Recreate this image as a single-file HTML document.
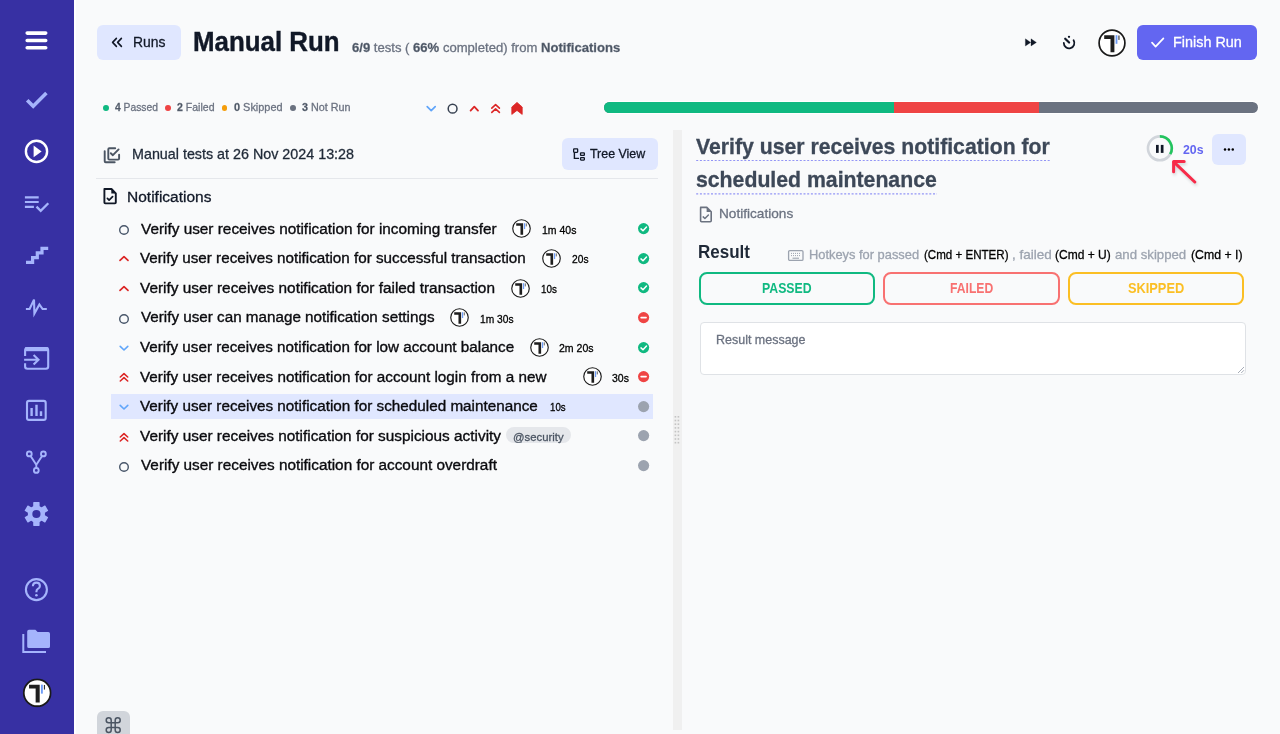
<!DOCTYPE html>
<html><head><meta charset="utf-8">
<style>
*{box-sizing:border-box;margin:0;padding:0}
html,body{width:1280px;height:734px;overflow:hidden;background:#f9fafb;font-family:"Liberation Sans",sans-serif;color:#111827;position:relative}
.a{position:absolute}
svg{display:block;overflow:visible}
.t{white-space:nowrap;position:absolute;line-height:1}
b{font-weight:700}
</style></head><body>
<svg width="0" height="0" style="position:absolute">
<defs>
<symbol id="tav" viewBox="0 0 28 28">
<circle cx="14" cy="14" r="12.9" fill="#fff" stroke="#1a1a1a" stroke-width="1.7"/>
<path d="M6.2 6.2H16.4V23.2H12.5V9.9H6.2Z" fill="#1f1f1f"/>
<rect x="17.6" y="6.2" width="1.8" height="8.6" fill="#6d9cf7"/>
<rect x="20.4" y="6.5" width="1.1" height="4.4" fill="#333"/>
</symbol>
</defs>
</svg>
<div class="a" style="left:0;top:0;width:74px;height:734px;background:#3730a3"></div>
<div class="a" style="left:74.3px;top:0;width:1.4px;height:734px;background:#fff"></div>
<svg class="a" style="left:0;top:0" width="74" height="734" viewBox="0 0 74 734">
<g stroke="#fff" stroke-width="3.6" stroke-linecap="round" fill="none">
<path d="M27.2 33.1H45.7M27.2 40.5H45.7M27.2 47.8H45.7"/>
</g>
<path d="M27.2 100.2L33.2 106.2L46.4 93" stroke="#a5b4fc" stroke-width="3.6" fill="none"/>
<circle cx="36.5" cy="151.4" r="10.6" stroke="#fff" stroke-width="2.4" fill="none"/>
<path d="M33.6 145.6L41.6 151.4L33.6 157.2Z" fill="#fff"/>
<g stroke="#a5b4fc" fill="none">
<path d="M24.9 197.4H38.7M24.9 202H38.7M24.9 206.9H33.9" stroke-width="2.2"/>
<path d="M36.5 206.6L40.7 210.8L48.3 203.2" stroke-width="2.3"/>
<path d="M26 262.4H32.6V257.7H37.3V252.9H42V248.4H48.2" stroke-width="3.2"/>
<path d="M25.9 309H29.6L34 299.6L34.4 313.6L39.4 304.5L42.6 309H46.8" stroke-width="2.1" stroke-linejoin="miter"/>
<path d="M25.1 356V350.4Q25.1 348.1 27.4 348.1H46Q48.2 348.1 48.2 350.4V366.6Q48.2 368.8 46 368.8H27.4Q25.1 368.8 25.1 366.6V363.2" stroke-width="2.1"/>
<path d="M25.1 349.2H48.2" stroke-width="4"/>
<path d="M24.1 359.7H38.5M33.6 355L38.5 359.7L33.6 364.6" stroke-width="2.1"/>
<rect x="27" y="400.9" width="18.7" height="19" rx="2" stroke-width="2.1"/>
<path d="M31.6 408V416M36.5 404.8V416M41 411.3V416" stroke-width="2.4"/>
<circle cx="29.3" cy="453.9" r="2.4" stroke-width="1.9"/>
<circle cx="43.4" cy="453.9" r="2.4" stroke-width="1.9"/>
<circle cx="36.3" cy="470.4" r="2.4" stroke-width="1.9"/>
<path d="M30.6 456L36.3 464.8L42.1 456M36.3 464.8V468" stroke-width="1.9"/>
<circle cx="36.4" cy="589.6" r="10.5" stroke-width="2.1"/>
<path d="M32.9 586.3Q32.9 582.6 36.4 582.6Q39.9 582.6 39.9 585.9Q39.9 587.8 37.8 588.9Q36.4 589.7 36.4 591.8V592.3" stroke-width="2.1"/>
<path d="M23.3 634V652H46" stroke-width="2"/>
</g>
<circle cx="36.4" cy="595.2" r="1.3" fill="#a5b4fc"/>
<path d="M27.2 631.5Q27.2 629.8 28.9 629.8H35.4L37.6 632H48.3Q50 632 50 633.7V646.4Q50 648.1 48.3 648.1H28.9Q27.2 648.1 27.2 646.4Z" fill="#a5b4fc"/>
<g transform="translate(36.4 514)" fill="#a5b4fc">
<circle r="8.6"/>
<g id="teeth"><rect x="-3.2" y="-11.9" width="6.4" height="5" rx="0.6"/></g>
<use href="#teeth" transform="rotate(60)"/><use href="#teeth" transform="rotate(120)"/><use href="#teeth" transform="rotate(180)"/><use href="#teeth" transform="rotate(240)"/><use href="#teeth" transform="rotate(300)"/>
<circle r="4.1" fill="#3730a3"/>
</g>
<use href="#tav" x="22.6" y="678.2" width="29.2" height="29.2"/>
</svg>
<div class="a" style="left:97px;top:25px;width:84px;height:35px;background:#e0e7ff;border-radius:6px"></div>
<svg class="a" style="left:108px;top:34px" width="18" height="16" viewBox="0 0 18 16"><path d="M8.4 4.4L4.6 8.4L8.4 12.4M13.4 4.4L9.6 8.4L13.4 12.4" stroke="#111827" stroke-width="1.6" fill="none" stroke-linecap="round" stroke-linejoin="round"/></svg>
<div class="t" style="left:133.00px;top:34.48px;font-size:15.5px;font-weight:400;color:#111827;-webkit-text-stroke:0.3px #111827;transform:scaleX(0.8981);transform-origin:0 0;">Runs</div>
<div class="t" style="left:193.00px;top:29.34px;font-size:27px;font-weight:700;color:#111827;-webkit-text-stroke:0.4px #111827;transform:scaleX(0.9582);transform-origin:0 0;">Manual Run</div>
<div class="t" style="left:351.80px;top:41.00px;font-size:13px;font-weight:400;color:#6b7280;-webkit-text-stroke:0.3px #6b7280;transform:scaleX(1.0059);transform-origin:0 0;"><b style="color:#4b5563">6/9</b> tests ( <b style="color:#4b5563">66%</b> completed) from <b style="color:#4b5563">Notifications</b></div>
<svg class="a" style="left:1018px;top:30px" width="64" height="26" viewBox="0 0 64 26"><path d="M7.4 8.8L12.7 12.4L7.4 16ZM13 8.8L18.4 12.4L13 16Z" fill="#111827" stroke="#111827" stroke-width="0.3" stroke-linejoin="round"/><path d="M45.8 13A5.3 5.3 0 1 0 55.6 10.2" stroke="#111827" stroke-width="1.8" fill="none" stroke-linecap="round"/><path d="M47.2 8.7L51.1 12.5" stroke="#111827" stroke-width="2.2" stroke-linecap="round"/><circle cx="51" cy="6.8" r="1.15" fill="#111827"/></svg>
<svg class="a" style="left:1097.5px;top:28.8px" width="28" height="28"><use href="#tav"/></svg>
<div class="a" style="left:1136.8px;top:25px;width:120.4px;height:35px;background:#6366f1;border-radius:6px"></div>
<svg class="a" style="left:1148px;top:34px" width="20" height="16" viewBox="0 0 20 16"><path d="M4 8.7L7.6 12.6L15.4 4.3" stroke="#fff" stroke-width="1.7" fill="none" stroke-linecap="round" stroke-linejoin="round"/></svg>
<div class="t" style="left:1172.50px;top:34.38px;font-size:15.5px;font-weight:400;color:#ffffff;-webkit-text-stroke:0.3px #ffffff;transform:scaleX(0.9286);transform-origin:0 0;">Finish Run</div>
<div class="a" style="left:103.0px;top:105.1px;width:5.8px;height:5.8px;border-radius:50%;background:#10b981"></div>
<div class="a" style="left:164.9px;top:105.1px;width:5.8px;height:5.8px;border-radius:50%;background:#ef4444"></div>
<div class="a" style="left:221.6px;top:105.1px;width:5.8px;height:5.8px;border-radius:50%;background:#f59e0b"></div>
<div class="a" style="left:290.4px;top:105.1px;width:5.8px;height:5.8px;border-radius:50%;background:#6b7280"></div>
<div class="t" style="left:115.00px;top:101.77px;font-size:11.5px;font-weight:400;color:#6b7280;-webkit-text-stroke:0.3px #6b7280;transform:scaleX(0.8943);transform-origin:0 0;"><b style="color:#4b5563">4</b> Passed</div>
<div class="t" style="left:177.30px;top:101.77px;font-size:11.5px;font-weight:400;color:#6b7280;-webkit-text-stroke:0.3px #6b7280;transform:scaleX(0.9160);transform-origin:0 0;"><b style="color:#4b5563">2</b> Failed</div>
<div class="t" style="left:234.20px;top:101.77px;font-size:11.5px;font-weight:400;color:#6b7280;-webkit-text-stroke:0.3px #6b7280;transform:scaleX(0.9497);transform-origin:0 0;"><b style="color:#4b5563">0</b> Skipped</div>
<div class="t" style="left:302.40px;top:101.77px;font-size:11.5px;font-weight:400;color:#6b7280;-webkit-text-stroke:0.3px #6b7280;transform:scaleX(0.9363);transform-origin:0 0;"><b style="color:#4b5563">3</b> Not Run</div>
<svg class="a" style="left:418px;top:96px" width="110" height="24" viewBox="0 0 110 24"><path d="M9.2 10.6L13.2 14.6L17.2 10.6" stroke="#60a5fa" stroke-width="1.7" fill="none" stroke-linecap="round" stroke-linejoin="round"/><circle cx="34.6" cy="12.7" r="4.4" stroke="#374151" stroke-width="1.5" fill="none"/><path d="M52.6 14.6L56.3 10.6L60 14.6" stroke="#dc2626" stroke-width="1.8" fill="none" stroke-linecap="round" stroke-linejoin="round"/><path d="M73.8 12.2L77.6 8.6L81.4 12.2M73.8 16.4L77.6 12.8L81.4 16.4" stroke="#dc2626" stroke-width="1.6" fill="none" stroke-linecap="round" stroke-linejoin="round"/><path d="M93.8 11L99 6.4L104.2 11V18.4L99 14.4L93.8 18.4Z" fill="#dc2626" stroke="#dc2626" stroke-width="0.8" stroke-linejoin="round"/></svg>
<div class="a" style="left:603.6px;top:102px;width:654px;height:11px;border-radius:5.5px;overflow:hidden;box-shadow:0 0 0 1px #fff;background:#6b7280"><div class="a" style="left:0;top:0;width:290.6px;height:11px;background:#10b981"></div><div class="a" style="left:290.6px;top:0;width:145.2px;height:11px;background:#ef4444"></div></div>
<svg class="a" style="left:100px;top:144px" width="24" height="22" viewBox="0 0 24 22"><path d="M4.7 7.1V17.2Q4.7 18.2 5.7 18.2H14.7" stroke="#4b5563" stroke-width="1.9" fill="none" stroke-linecap="round"/><path d="M15.2 4.2H9.3Q8.3 4.2 8.3 5.2V14.6Q8.3 15.6 9.3 15.6H18.1Q19.1 15.6 19.1 14.6V10.8" stroke="#4b5563" stroke-width="1.9" fill="none" stroke-linecap="round"/><path d="M10.8 9.2L12.9 11.2L18.6 5.4" stroke="#4b5563" stroke-width="1.9" fill="none" stroke-linecap="round" stroke-linejoin="round"/></svg>
<div class="t" style="left:131.80px;top:146.10px;font-size:15px;font-weight:400;color:#1f2937;-webkit-text-stroke:0.3px #1f2937;transform:scaleX(0.9542);transform-origin:0 0;">Manual tests at 26 Nov 2024 13:28</div>
<div class="a" style="left:561.6px;top:138.2px;width:96px;height:31.6px;background:#e0e7ff;border-radius:6px"></div>
<svg class="a" style="left:570px;top:145px" width="18" height="18" viewBox="0 0 18 18"><rect x="3.65" y="3.95" width="4" height="3.4" rx="0.5" stroke="#111827" stroke-width="1.3" fill="none"/><path d="M4.4 7.6V13.4H9" stroke="#111827" stroke-width="1.4" fill="none"/><rect x="10.55" y="7.85" width="3.8" height="2.6" rx="0.5" stroke="#111827" stroke-width="1.3" fill="none"/><rect x="10.55" y="12.65" width="3.8" height="2.4" rx="0.5" stroke="#111827" stroke-width="1.3" fill="none"/></svg>
<div class="t" style="left:590.20px;top:146.73px;font-size:13.2px;font-weight:400;color:#111827;-webkit-text-stroke:0.3px #111827;transform:scaleX(0.9413);transform-origin:0 0;">Tree View</div>
<div class="a" style="left:96px;top:178px;width:561.5px;height:1px;background:#e5e7eb;"></div>
<svg class="a" style="left:100px;top:185px" width="20" height="22" viewBox="0 0 20 22"><path d="M4.4 4H11.5L15.8 8.3V17.6Q15.8 18.4 15 18.4H5.2Q4.4 18.4 4.4 17.6V4.8Q4.4 4 5.2 4Z" stroke="#111827" stroke-width="1.9" fill="none" stroke-linejoin="round"/><path d="M11.3 4V8.5H15.8Z" fill="#111827"/><path d="M7.4 13.4L9.1 15.1L12.6 11.6" stroke="#111827" stroke-width="1.7" fill="none" stroke-linecap="round" stroke-linejoin="round"/></svg>
<div class="t" style="left:126.80px;top:189.38px;font-size:15.5px;font-weight:400;color:#111827;-webkit-text-stroke:0.3px #111827;transform:scaleX(1.0007);transform-origin:0 0;">Notifications</div>
<div class="a" style="left:111.2px;top:393.6px;width:541.8px;height:25.8px;background:#e0e7ff;"></div>
<svg class="a" style="left:119.3px;top:225.3px" width="10" height="10" viewBox="0 0 10 10"><circle cx="5" cy="5" r="4.3" stroke="#475569" stroke-width="1.4" fill="none"/></svg>
<div class="t" style="left:141.00px;top:220.53px;font-size:15.2px;font-weight:400;color:#0b0b0f;-webkit-text-stroke:0.35px #0b0b0f;transform:scaleX(1.0102);transform-origin:0 0;">Verify user receives notification for incoming transfer</div>
<svg class="a" style="left:512.0px;top:219.30px" width="19" height="19"><use href="#tav"/></svg>
<div class="t" style="left:541.80px;top:224.73px;font-size:11.3px;font-weight:400;color:#000000;-webkit-text-stroke:0.3px #000000;transform:scaleX(0.9286);transform-origin:0 0;">1m 40s</div>
<svg class="a" style="left:637.8px;top:223.1px" width="11.2" height="11.2" viewBox="0 0 11.2 11.2"><circle cx="5.6" cy="5.6" r="5.6" fill="#10b981"/><path d="M3 5.9L5 7.7L8.5 4" stroke="#fff" stroke-width="1.5" fill="none" stroke-linecap="round" stroke-linejoin="round"/></svg>
<svg class="a" style="left:119.3px;top:253.1px" width="10" height="10" viewBox="0 0 10 10"><path d="M1 7.3L5 3.6L9 7.3" stroke="#dc2626" stroke-width="1.7" fill="none" stroke-linecap="round" stroke-linejoin="round"/></svg>
<div class="t" style="left:140.00px;top:250.13px;font-size:15.2px;font-weight:400;color:#0b0b0f;-webkit-text-stroke:0.35px #0b0b0f;transform:scaleX(1.0020);transform-origin:0 0;">Verify user receives notification for successful transaction</div>
<svg class="a" style="left:541.8px;top:248.90px" width="19" height="19"><use href="#tav"/></svg>
<div class="t" style="left:571.50px;top:254.33px;font-size:11.3px;font-weight:400;color:#000000;-webkit-text-stroke:0.3px #000000;transform:scaleX(0.9057);transform-origin:0 0;">20s</div>
<svg class="a" style="left:637.8px;top:252.7px" width="11.2" height="11.2" viewBox="0 0 11.2 11.2"><circle cx="5.6" cy="5.6" r="5.6" fill="#10b981"/><path d="M3 5.9L5 7.7L8.5 4" stroke="#fff" stroke-width="1.5" fill="none" stroke-linecap="round" stroke-linejoin="round"/></svg>
<svg class="a" style="left:119.3px;top:282.7px" width="10" height="10" viewBox="0 0 10 10"><path d="M1 7.3L5 3.6L9 7.3" stroke="#dc2626" stroke-width="1.7" fill="none" stroke-linecap="round" stroke-linejoin="round"/></svg>
<div class="t" style="left:140.00px;top:279.73px;font-size:15.2px;font-weight:400;color:#0b0b0f;-webkit-text-stroke:0.35px #0b0b0f;transform:scaleX(1.0133);transform-origin:0 0;">Verify user receives notification for failed transaction</div>
<svg class="a" style="left:511.3px;top:278.50px" width="19" height="19"><use href="#tav"/></svg>
<div class="t" style="left:540.60px;top:283.93px;font-size:11.3px;font-weight:400;color:#000000;-webkit-text-stroke:0.3px #000000;transform:scaleX(0.8727);transform-origin:0 0;">10s</div>
<svg class="a" style="left:637.8px;top:282.3px" width="11.2" height="11.2" viewBox="0 0 11.2 11.2"><circle cx="5.6" cy="5.6" r="5.6" fill="#10b981"/><path d="M3 5.9L5 7.7L8.5 4" stroke="#fff" stroke-width="1.5" fill="none" stroke-linecap="round" stroke-linejoin="round"/></svg>
<svg class="a" style="left:119.3px;top:314.1px" width="10" height="10" viewBox="0 0 10 10"><circle cx="5" cy="5" r="4.3" stroke="#475569" stroke-width="1.4" fill="none"/></svg>
<div class="t" style="left:141.00px;top:309.33px;font-size:15.2px;font-weight:400;color:#0b0b0f;-webkit-text-stroke:0.35px #0b0b0f;transform:scaleX(1.0019);transform-origin:0 0;">Verify user can manage notification settings</div>
<svg class="a" style="left:449.7px;top:308.10px" width="19" height="19"><use href="#tav"/></svg>
<div class="t" style="left:479.70px;top:313.53px;font-size:11.3px;font-weight:400;color:#000000;-webkit-text-stroke:0.3px #000000;transform:scaleX(0.9043);transform-origin:0 0;">1m 30s</div>
<svg class="a" style="left:637.8px;top:311.9px" width="11.2" height="11.2" viewBox="0 0 11.2 11.2"><circle cx="5.6" cy="5.6" r="5.6" fill="#ef4444"/><path d="M3.2 5.6H8" stroke="#fff" stroke-width="1.8" stroke-linecap="round"/></svg>
<svg class="a" style="left:119.3px;top:342.8px" width="10" height="10" viewBox="0 0 10 10"><path d="M1.2 3.4L5 7L8.8 3.4" stroke="#60a5fa" stroke-width="1.6" fill="none" stroke-linecap="round" stroke-linejoin="round"/></svg>
<div class="t" style="left:140.00px;top:338.93px;font-size:15.2px;font-weight:400;color:#0b0b0f;-webkit-text-stroke:0.35px #0b0b0f;transform:scaleX(1.0028);transform-origin:0 0;">Verify user receives notification for low account balance</div>
<svg class="a" style="left:529.6px;top:337.70px" width="19" height="19"><use href="#tav"/></svg>
<div class="t" style="left:559.40px;top:343.13px;font-size:11.3px;font-weight:400;color:#000000;-webkit-text-stroke:0.3px #000000;transform:scaleX(0.9340);transform-origin:0 0;">2m 20s</div>
<svg class="a" style="left:637.8px;top:341.5px" width="11.2" height="11.2" viewBox="0 0 11.2 11.2"><circle cx="5.6" cy="5.6" r="5.6" fill="#10b981"/><path d="M3 5.9L5 7.7L8.5 4" stroke="#fff" stroke-width="1.5" fill="none" stroke-linecap="round" stroke-linejoin="round"/></svg>
<svg class="a" style="left:119.3px;top:372.4px" width="10" height="10" viewBox="0 0 10 10"><path d="M1.3 5L5 1.6L8.7 5M1.3 9L5 5.6L8.7 9" stroke="#dc2626" stroke-width="1.6" fill="none" stroke-linecap="round" stroke-linejoin="round"/></svg>
<div class="t" style="left:140.00px;top:368.53px;font-size:15.2px;font-weight:400;color:#0b0b0f;-webkit-text-stroke:0.35px #0b0b0f;transform:scaleX(1.0053);transform-origin:0 0;">Verify user receives notification for account login from a new</div>
<svg class="a" style="left:582.8px;top:367.30px" width="19" height="19"><use href="#tav"/></svg>
<div class="t" style="left:612.10px;top:372.73px;font-size:11.3px;font-weight:400;color:#000000;-webkit-text-stroke:0.3px #000000;transform:scaleX(0.9276);transform-origin:0 0;">30s</div>
<svg class="a" style="left:637.8px;top:371.1px" width="11.2" height="11.2" viewBox="0 0 11.2 11.2"><circle cx="5.6" cy="5.6" r="5.6" fill="#ef4444"/><path d="M3.2 5.6H8" stroke="#fff" stroke-width="1.8" stroke-linecap="round"/></svg>
<svg class="a" style="left:119.3px;top:402.0px" width="10" height="10" viewBox="0 0 10 10"><path d="M1.2 3.4L5 7L8.8 3.4" stroke="#60a5fa" stroke-width="1.6" fill="none" stroke-linecap="round" stroke-linejoin="round"/></svg>
<div class="t" style="left:140.00px;top:398.13px;font-size:15.2px;font-weight:400;color:#0b0b0f;-webkit-text-stroke:0.35px #0b0b0f;transform:scaleX(1.0046);transform-origin:0 0;">Verify user receives notification for scheduled maintenance</div>
<div class="t" style="left:550.00px;top:402.33px;font-size:11.3px;font-weight:400;color:#000000;-webkit-text-stroke:0.3px #000000;transform:scaleX(0.8563);transform-origin:0 0;">10s</div>
<svg class="a" style="left:637.8px;top:400.7px" width="11.2" height="11.2" viewBox="0 0 11.2 11.2"><circle cx="5.6" cy="5.6" r="5.6" fill="#9ca3af"/></svg>
<svg class="a" style="left:119.3px;top:431.6px" width="10" height="10" viewBox="0 0 10 10"><path d="M1.3 5L5 1.6L8.7 5M1.3 9L5 5.6L8.7 9" stroke="#dc2626" stroke-width="1.6" fill="none" stroke-linecap="round" stroke-linejoin="round"/></svg>
<div class="t" style="left:140.00px;top:427.73px;font-size:15.2px;font-weight:400;color:#0b0b0f;-webkit-text-stroke:0.35px #0b0b0f;transform:scaleX(1.0110);transform-origin:0 0;">Verify user receives notification for suspicious activity</div>
<div class="a" style="left:505.6px;top:426.5px;width:65px;height:16.2px;background:#e5e7eb;border-radius:8px"></div>
<div class="t" style="left:513.10px;top:431.77px;font-size:11.5px;font-weight:400;color:#4b5563;-webkit-text-stroke:0.3px #4b5563;transform:scaleX(0.9864);transform-origin:0 0;">@security</div>
<svg class="a" style="left:637.8px;top:430.3px" width="11.2" height="11.2" viewBox="0 0 11.2 11.2"><circle cx="5.6" cy="5.6" r="5.6" fill="#9ca3af"/></svg>
<svg class="a" style="left:119.3px;top:462.1px" width="10" height="10" viewBox="0 0 10 10"><circle cx="5" cy="5" r="4.3" stroke="#475569" stroke-width="1.4" fill="none"/></svg>
<div class="t" style="left:141.00px;top:457.33px;font-size:15.2px;font-weight:400;color:#0b0b0f;-webkit-text-stroke:0.35px #0b0b0f;transform:scaleX(1.0086);transform-origin:0 0;">Verify user receives notification for account overdraft</div>
<svg class="a" style="left:637.8px;top:459.9px" width="11.2" height="11.2" viewBox="0 0 11.2 11.2"><circle cx="5.6" cy="5.6" r="5.6" fill="#9ca3af"/></svg>
<div class="a" style="left:673px;top:130px;width:8.7px;height:600px;background:#f0f0f0;"></div>
<svg class="a" style="left:674px;top:415px" width="6" height="30" viewBox="0 0 6 30"><rect x="0.6" y="1.0" width="1.6" height="1.6" fill="#c4c4c4"/><rect x="3.6" y="1.0" width="1.6" height="1.6" fill="#c4c4c4"/><rect x="0.6" y="4.7" width="1.6" height="1.6" fill="#c4c4c4"/><rect x="3.6" y="4.7" width="1.6" height="1.6" fill="#c4c4c4"/><rect x="0.6" y="8.4" width="1.6" height="1.6" fill="#c4c4c4"/><rect x="3.6" y="8.4" width="1.6" height="1.6" fill="#c4c4c4"/><rect x="0.6" y="12.1" width="1.6" height="1.6" fill="#c4c4c4"/><rect x="3.6" y="12.1" width="1.6" height="1.6" fill="#c4c4c4"/><rect x="0.6" y="15.8" width="1.6" height="1.6" fill="#c4c4c4"/><rect x="3.6" y="15.8" width="1.6" height="1.6" fill="#c4c4c4"/><rect x="0.6" y="19.5" width="1.6" height="1.6" fill="#c4c4c4"/><rect x="3.6" y="19.5" width="1.6" height="1.6" fill="#c4c4c4"/><rect x="0.6" y="23.2" width="1.6" height="1.6" fill="#c4c4c4"/><rect x="3.6" y="23.2" width="1.6" height="1.6" fill="#c4c4c4"/><rect x="0.6" y="26.9" width="1.6" height="1.6" fill="#c4c4c4"/><rect x="3.6" y="26.9" width="1.6" height="1.6" fill="#c4c4c4"/></svg>
<div class="t" style="left:696.20px;top:135.88px;font-size:22px;font-weight:700;color:#3d4858;-webkit-text-stroke:0.3px #3d4858;transform:scaleX(0.9645);transform-origin:0 0;">Verify user receives notification for</div>
<div class="t" style="left:696.20px;top:169.38px;font-size:22px;font-weight:700;color:#3d4858;-webkit-text-stroke:0.3px #3d4858;transform:scaleX(0.9654);transform-origin:0 0;">scheduled maintenance</div>
<svg class="a" style="left:696px;top:159px" width="356" height="2" viewBox="0 0 356 2"><path d="M0.2 1.5H354" stroke="#9395f6" stroke-width="1.1" stroke-dasharray="2 1.7"/></svg>
<svg class="a" style="left:696px;top:193px" width="243" height="2" viewBox="0 0 243 2"><path d="M0.2 0.9H241" stroke="#9395f6" stroke-width="1.1" stroke-dasharray="2 1.7"/></svg>
<svg class="a" style="left:696px;top:204px" width="20" height="21" viewBox="0 0 20 21"><path d="M4.6 3.4H10.8L15.2 7.8V16.8Q15.2 17.8 14.2 17.8H5.6Q4.6 17.8 4.6 16.8V4.4Q4.6 3.4 5.6 3.4Z" stroke="#6b7280" stroke-width="1.6" fill="none" stroke-linejoin="round"/><path d="M10.6 3.4V8H15.2Z" fill="#6b7280"/><path d="M7.2 12.9L8.9 14.5L12.4 11" stroke="#6b7280" stroke-width="1.5" fill="none" stroke-linecap="round" stroke-linejoin="round"/></svg>
<div class="t" style="left:718.80px;top:206.87px;font-size:13.5px;font-weight:400;color:#6b7280;-webkit-text-stroke:0.3px #6b7280;transform:scaleX(1.0089);transform-origin:0 0;">Notifications</div>
<svg class="a" style="left:1144px;top:132px" width="32" height="32" viewBox="0 0 32 32"><circle cx="15.85" cy="16.3" r="11.9" stroke="#d1d5db" stroke-width="2.6" fill="none"/><path d="M15.85 4.4A11.9 11.9 0 0 1 26.2 22.2" stroke="#22c55e" stroke-width="2.6" fill="none"/><rect x="12" y="12.9" width="2.7" height="8" fill="#111827"/><rect x="16.8" y="12.9" width="2.7" height="8" fill="#111827"/></svg>
<div class="t" style="left:1182.60px;top:142.80px;font-size:13px;font-weight:700;color:#6366f1;transform:scaleX(0.9492);transform-origin:0 0;">20s</div>
<div class="a" style="left:1211.7px;top:134px;width:34.7px;height:31px;background:#e0e7ff;border-radius:6px"></div>
<svg class="a" style="left:1220px;top:144px" width="18" height="10" viewBox="0 0 18 10"><circle cx="5" cy="5.45" r="1.25" fill="#000"/><circle cx="8.9" cy="5.45" r="1.25" fill="#000"/><circle cx="12.75" cy="5.45" r="1.25" fill="#000"/></svg>
<svg class="a" style="left:1165px;top:155px" width="36" height="34" viewBox="0 0 36 34"><g style="filter:drop-shadow(1px 2px 1.5px rgba(0,0,0,.16))"><path d="M9 7.2L29.8 27" stroke="#f72a48" stroke-width="3" stroke-linecap="round" fill="none"/><path d="M19.2 6.6H8.6V16.8" stroke="#f72a48" stroke-width="3" stroke-linecap="round" stroke-linejoin="round" fill="none"/></g></svg>
<div class="t" style="left:697.60px;top:242.84px;font-size:18.5px;font-weight:700;color:#1f2937;transform:scaleX(0.9196);transform-origin:0 0;">Result</div>
<svg class="a" style="left:786px;top:248px" width="20" height="15" viewBox="0 0 20 15"><rect x="2.6" y="2.6" width="14.4" height="9.8" rx="1.2" stroke="#9ca3af" stroke-width="1.3" fill="none"/><path d="M5 5.4H14.6M5 7.6H14.6" stroke="#9ca3af" stroke-width="1" stroke-dasharray="1 1"/><path d="M6.5 10.2H13" stroke="#9ca3af" stroke-width="1.1"/></svg>
<div class="t" style="left:808.80px;top:247.60px;font-size:13px;font-weight:400;color:#9ca3af;-webkit-text-stroke:0.3px #9ca3af;transform:scaleX(0.9894);transform-origin:0 0;">Hotkeys for passed</div>
<div class="t" style="left:923.60px;top:247.60px;font-size:13px;font-weight:400;color:#000000;-webkit-text-stroke:0.3px #000000;transform:scaleX(0.8896);transform-origin:0 0;">(Cmd + ENTER)</div>
<div class="t" style="left:1011.60px;top:247.60px;font-size:13px;font-weight:400;color:#9ca3af;-webkit-text-stroke:0.3px #9ca3af;transform:scaleX(1.0388);transform-origin:0 0;">, failed</div>
<div class="t" style="left:1055.40px;top:247.60px;font-size:13px;font-weight:400;color:#000000;-webkit-text-stroke:0.3px #000000;transform:scaleX(0.9235);transform-origin:0 0;">(Cmd + U)</div>
<div class="t" style="left:1115.40px;top:247.60px;font-size:13px;font-weight:400;color:#9ca3af;-webkit-text-stroke:0.3px #9ca3af;transform:scaleX(1.0153);transform-origin:0 0;">and skipped</div>
<div class="t" style="left:1190.80px;top:247.60px;font-size:13px;font-weight:400;color:#000000;-webkit-text-stroke:0.3px #000000;transform:scaleX(0.9441);transform-origin:0 0;">(Cmd + I)</div>
<div class="a" style="left:698.7px;top:272.2px;width:176.1px;height:32.8px;border:2px solid #10b981;border-radius:8px"></div>
<div class="t" style="left:762.00px;top:280.38px;font-size:15.5px;font-weight:700;color:#10b981;transform:scaleX(0.7924);transform-origin:0 0;">PASSED</div>
<div class="a" style="left:882.8px;top:272.2px;width:176.8px;height:32.8px;border:2px solid #f87171;border-radius:8px"></div>
<div class="t" style="left:949.90px;top:280.38px;font-size:15.5px;font-weight:700;color:#f87171;transform:scaleX(0.7837);transform-origin:0 0;">FAILED</div>
<div class="a" style="left:1067.8px;top:272.2px;width:176.4px;height:32.8px;border:2px solid #fbbf24;border-radius:8px"></div>
<div class="t" style="left:1127.50px;top:280.38px;font-size:15.5px;font-weight:700;color:#fbbf24;transform:scaleX(0.8257);transform-origin:0 0;">SKIPPED</div>
<div class="a" style="left:700.4px;top:322px;width:545.4px;height:52.7px;background:#ffffff;border:1px solid #dfe2e6;border-radius:4px"></div>
<div class="t" style="left:716.30px;top:332.60px;font-size:13px;font-weight:400;color:#6b7280;-webkit-text-stroke:0.3px #6b7280;transform:scaleX(0.9601);transform-origin:0 0;">Result message</div>
<svg class="a" style="left:1236px;top:365px" width="9" height="9" viewBox="0 0 9 9"><path d="M8 2L2 8M8 5.2L5.2 8" stroke="#9ca3af" stroke-width="0.9"/></svg>
<div class="a" style="left:97px;top:711.4px;width:32.6px;height:30px;background:#d1d5db;border-radius:6px"></div>
<svg class="a" style="left:100px;top:712.7px" width="24" height="24" viewBox="100 712 24 24"><path d="M111.2 719.3V728.9M115.2 719.3V728.9M108.7 721.8H117.7M108.7 726.4H117.7M111.2 719.3A2.5 2.5 0 1 0 108.7 721.8M115.2 719.3A2.5 2.5 0 1 1 117.7 721.8M111.2 728.9A2.5 2.5 0 1 1 108.7 726.4M115.2 728.9A2.5 2.5 0 1 0 117.7 726.4" stroke="#4b5563" stroke-width="1.5" fill="none"/></svg>

</body></html>
